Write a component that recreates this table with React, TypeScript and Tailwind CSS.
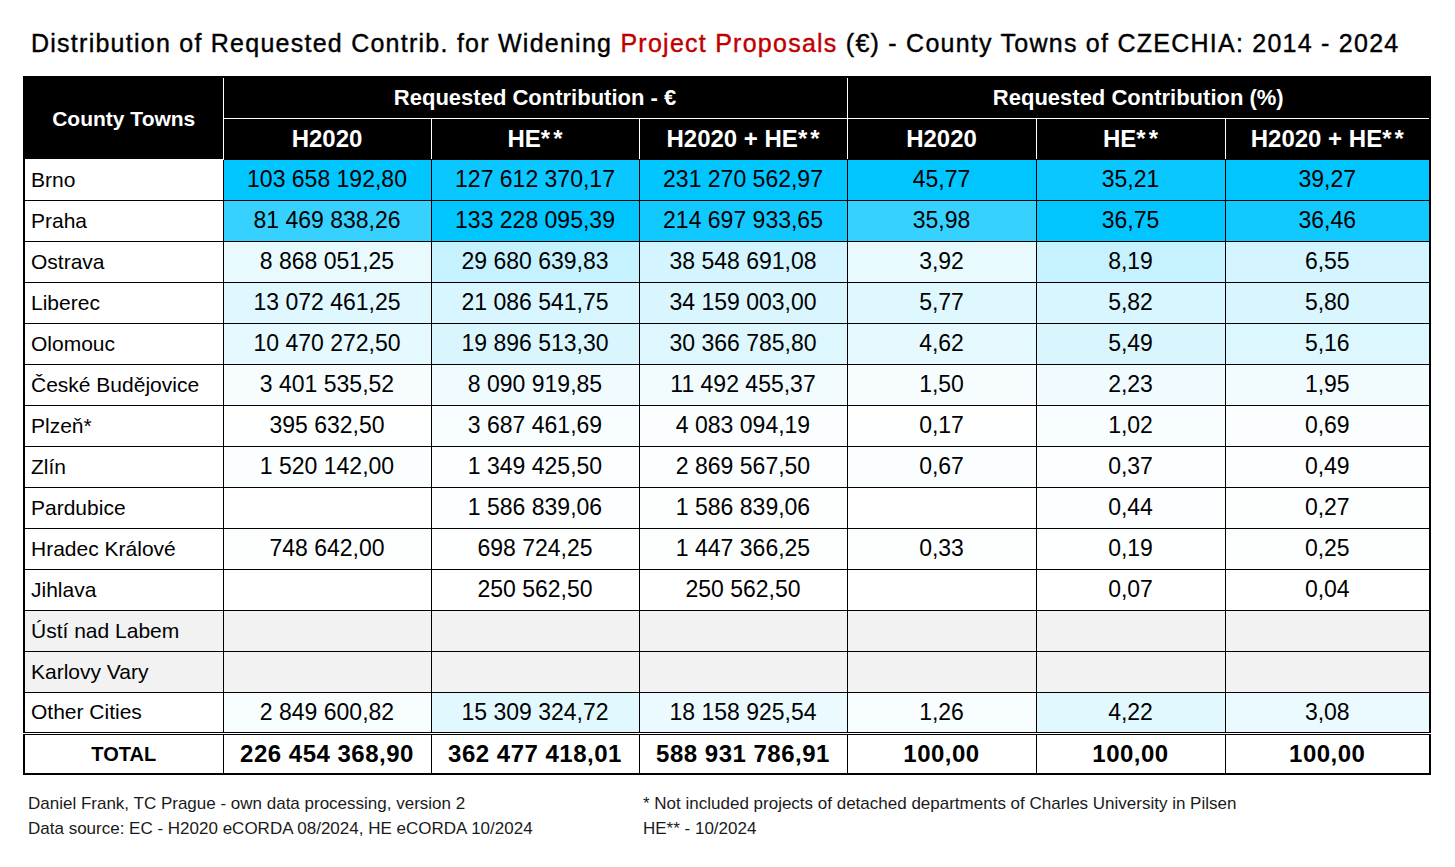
import React from "react";

type Row = {
  name: string;
  v: (number | null)[];
  gray?: boolean;
};

const rows: Row[] = [
  { name: "Brno", v: [103658192.8, 127612370.17, 231270562.97, 45.77, 35.21, 39.27] },
  { name: "Praha", v: [81469838.26, 133228095.39, 214697933.65, 35.98, 36.75, 36.46] },
  { name: "Ostrava", v: [8868051.25, 29680639.83, 38548691.08, 3.92, 8.19, 6.55] },
  { name: "Liberec", v: [13072461.25, 21086541.75, 34159003.0, 5.77, 5.82, 5.8] },
  { name: "Olomouc", v: [10470272.5, 19896513.3, 30366785.8, 4.62, 5.49, 5.16] },
  { name: "České Budějovice", v: [3401535.52, 8090919.85, 11492455.37, 1.5, 2.23, 1.95] },
  { name: "Plzeň*", v: [395632.5, 3687461.69, 4083094.19, 0.17, 1.02, 0.69] },
  { name: "Zlín", v: [1520142.0, 1349425.5, 2869567.5, 0.67, 0.37, 0.49] },
  { name: "Pardubice", v: [null, 1586839.06, 1586839.06, null, 0.44, 0.27] },
  { name: "Hradec Králové", v: [748642.0, 698724.25, 1447366.25, 0.33, 0.19, 0.25] },
  { name: "Jihlava", v: [null, 250562.5, 250562.5, null, 0.07, 0.04] },
  { name: "Ústí nad Labem", v: [null, null, null, null, null, null], gray: true },
  { name: "Karlovy Vary", v: [null, null, null, null, null, null], gray: true },
  { name: "Other Cities", v: [2849600.82, 15309324.72, 18158925.54, 1.26, 4.22, 3.08] },
];

const totals = ["226 454 368,90", "362 477 418,01", "588 931 786,91", "100,00", "100,00", "100,00"];

const maxes = [0, 1, 2, 3, 4, 5].map((i) =>
  Math.max(...rows.map((r) => (r.v[i] ?? 0)))
);

function fmt(n: number): string {
  const fixed = n.toFixed(2);
  const [int, dec] = fixed.split(".");
  const withSpaces = int.replace(/\B(?=(\d{3})+(?!\d))/g, " ");
  return `${withSpaces},${dec}`;
}

function bg(v: number | null, max: number): string | undefined {
  if (v == null) return undefined;
  const f = v / max;
  const r = Math.round(255 * (1 - f));
  const g = Math.round(255 - (255 - 197) * f);
  return `rgb(${r},${g},255)`;
}

function Head({ text }: { text: string }) {
  if (!text.endsWith("**")) return <>{text}</>;
  const base = text.slice(0, -2);
  return (
    <>
      {base}
      <span className="tracking-[3px]">*</span>*
    </>
  );
}

export default function App() {
  return (
    <div className="w-[1455px] h-[867px] bg-white text-black" style={{ fontFamily: '"Liberation Sans", Arial, sans-serif' }}>
      <div className="pt-[28px] pl-[31px] h-[76px] text-[25px] leading-[30px] tracking-[1.25px] whitespace-nowrap [-webkit-text-stroke:0.4px_black]">
        Distribution of Requested Contrib. for Widening <span className="text-[#c00000] [-webkit-text-stroke:0.4px_#c00000]">Project Proposals</span> (€) - County Towns of CZECHIA: 2014 - 2024
      </div>
      <div className="pl-[23px]">
        <table className="table-fixed border-collapse border-2 border-black w-[1406px]">
          <colgroup>
            <col className="w-[199px]" />
            <col className="w-[208px]" />
            <col className="w-[208px]" />
            <col className="w-[208px]" />
            <col className="w-[189px]" />
            <col className="w-[189px]" />
            <col className="w-[205px]" />
          </colgroup>
          <thead className="bg-black text-white">
            <tr className="h-[41px]">
              <th rowSpan={2} className="border border-white border-l-black border-t-black font-bold text-[21px] text-center">
                County Towns
              </th>
              <th colSpan={3} className="border border-white border-t-black font-bold text-[22px]">
                Requested Contribution - €
              </th>
              <th colSpan={3} className="border border-white border-t-black border-r-black font-bold text-[22px]">
                Requested Contribution (%)
              </th>
            </tr>
            <tr className="h-[41px]">
              {["H2020", "HE**", "H2020 + HE**", "H2020", "HE**", "H2020 + HE**"].map((h, i) => (
                <th key={i} className={`border border-white border-b-black font-bold text-[24px] ${i === 5 ? "border-r-black" : ""}`}>
                  <Head text={h} />
                </th>
              ))}
            </tr>
          </thead>
          <tbody>
            {rows.map((r) => (
              <tr key={r.name} className={`h-[41px] ${r.gray ? "bg-[#f2f2f2]" : ""}`}>
                <td className="border border-black pl-[6px] whitespace-nowrap text-[21px]">{r.name}</td>
                {r.v.map((v, i) => (
                  <td key={i} className="border border-black text-center whitespace-nowrap text-[23px]" style={{ backgroundColor: bg(v, maxes[i]) }}>
                    {v == null ? "" : fmt(v)}
                  </td>
                ))}
              </tr>
            ))}
            <tr className="h-[41px] font-bold">
              <td className="border border-black border-t-[3px] border-t-black border-double text-center text-[20px]">TOTAL</td>
              {totals.map((t, i) => (
                <td key={i} className="border border-black border-t-[3px] border-double text-center whitespace-nowrap text-[24px] tracking-[0.5px]">
                  {t}
                </td>
              ))}
            </tr>
          </tbody>
        </table>
      </div>
      <div className="flex pl-[28px] pt-[16px] text-[17px] leading-[25px] text-[#1a1a1a]">
        <div className="w-[615px]">
          <div>Daniel Frank, TC Prague - own data processing, version 2</div>
          <div>Data source: EC - H2020 eCORDA 08/2024, HE eCORDA 10/2024</div>
        </div>
        <div>
          <div>* Not included projects of detached departments of Charles University in Pilsen</div>
          <div>HE** - 10/2024</div>
        </div>
      </div>
    </div>
  );
}
